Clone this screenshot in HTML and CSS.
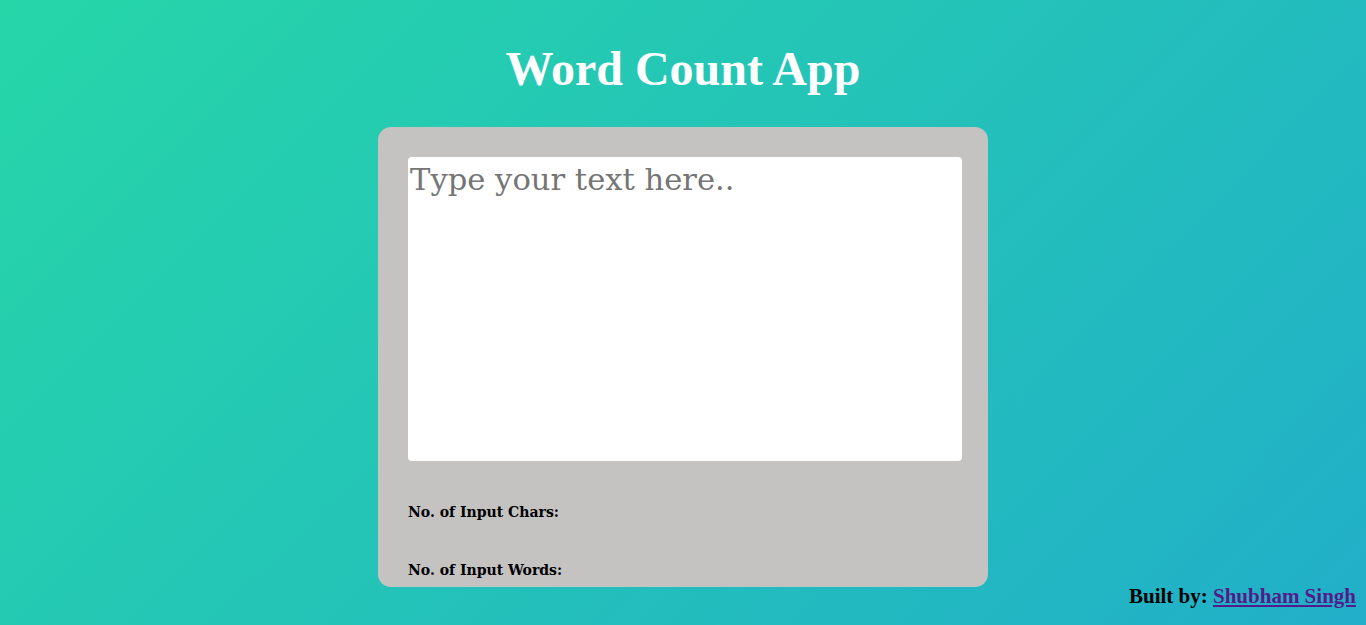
FILE: index.html
```html
<!DOCTYPE html>
<html>
<head>
<meta charset="utf-8">
<title>Word Count App</title>
<link rel="stylesheet" href="styles.css">
</head>
<body>
<div class="page">
  <h1 class="title">Word Count App</h1>
  <div class="card">
    <textarea class="input" placeholder="Type your text here.."></textarea>
    <div class="stats">
      <p class="stat">No. of Input Chars: <span class="val"></span></p>
      <p class="stat">No. of Input Words: <span class="val"></span></p>
    </div>
  </div>
  <div class="footer">Built by: <a class="author" href="#">Shubham Singh</a></div>
</div>
</body>
</html>
```
FILE: styles.css
```css
html, body {
  margin: 0;
  padding: 0;
  height: 100%;
}
body {
  background: linear-gradient(135deg, #26d6a8 0%, #21afc9 100%);
  font-family: "Liberation Serif", serif;
  overflow: hidden;
}
.page {
  display: flex;
  flex-direction: column;
  align-items: center;
  height: 625px;
}
.title {
  margin: 41px 0 0;
  color: #fff;
  font-size: 48px;
  font-weight: bold;
  line-height: 55px;
}
.card {
  margin-top: 31px;
  width: 610px;
  height: 460px;
  box-sizing: border-box;
  background: #c4c3c2;
  border-radius: 13px;
  padding: 30px 26px 0 30px;
  display: flex;
  flex-direction: column;
}
.input {
  display: block;
  width: 554px;
  height: 304px;
  box-sizing: border-box;
  border: none;
  border-radius: 4px;
  background: #fff;
  padding: 5px 2px 2px;
  resize: none;
  font-family: "DejaVu Serif", serif;
  font-size: 30.6px;
  color: #333;
  outline: none;
}
.input::placeholder {
  color: #757575;
}
.stats {
  display: flex;
  flex-direction: column;
  gap: 39px;
  margin-top: 41px;
}
.stat {
  margin: 0;
  font-family: "DejaVu Serif", serif;
  font-stretch: condensed;
  font-weight: bold;
  font-size: 15.6px;
  line-height: 19px;
  color: #000;
}
.footer {
  align-self: flex-end;
  margin: -2px 10px 0 0;
  font-size: 21px;
  font-weight: bold;
  line-height: 23px;
  color: #000;
}
.author {
  color: #551a8b;
}
```
